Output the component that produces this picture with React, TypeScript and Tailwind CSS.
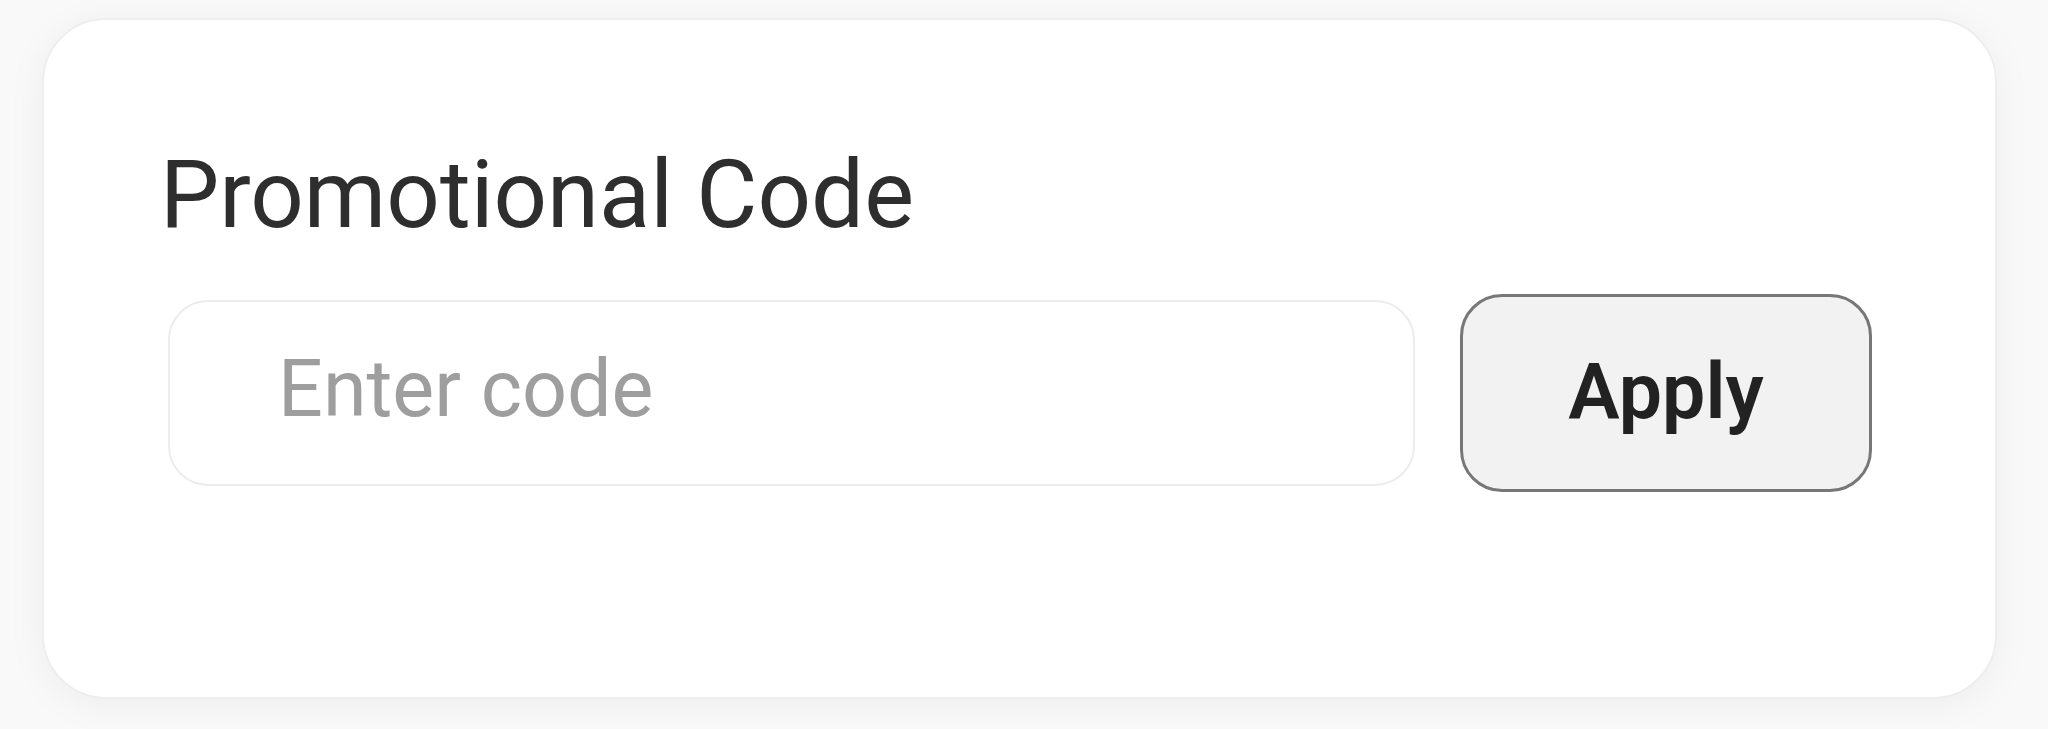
import React, { useState } from 'react';

const font = { fontFamily: 'Roboto, "Noto Sans", sans-serif' };

export default function App() {
  const [code, setCode] = useState('');

  return (
    <div className="h-[729px] w-full overflow-hidden bg-[#f9f9f9] pt-[18px] pl-[42px]" style={font}>
      <div className="h-[681px] w-[1955px] rounded-[64px] border-2 border-[#eeeeee] bg-white pt-[128px] pl-[124px] pr-[123px] shadow-[0_6px_40px_rgba(0,0,0,0.05)]">
        <h2 className="-ml-2 text-[94px] leading-none font-normal text-[#2e2e2e]">Promotional Code</h2>
        <div className="mt-[52px] flex items-center gap-[45px]">
          <input
            type="text"
            value={code}
            onChange={(e) => setCode(e.target.value)}
            placeholder="Enter code"
            className="h-[186px] min-w-0 flex-1 rounded-[40px] border-2 border-[#ececec] bg-white pl-[108px] pb-2 text-[79px] text-[#333333] outline-none placeholder:text-[#9e9e9e]"
          />
          <button className="h-[198px] w-[412px] rounded-[42px] border-[3px] border-[#777777] bg-[#f2f2f2] text-[77px] font-semibold text-[#222222]">
            Apply
          </button>
        </div>
      </div>
    </div>
  );
}
